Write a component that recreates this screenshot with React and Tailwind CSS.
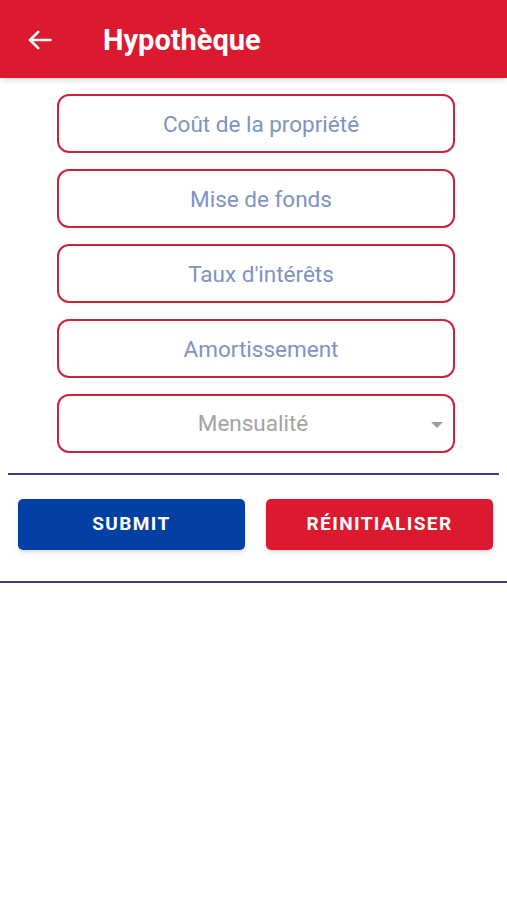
import { useState } from 'react'

const fields = ['Coût de la propriété', 'Mise de fonds', "Taux d'intérêts", 'Amortissement']

export default function App() {
  const [values, setValues] = useState({})

  return (
    <div className="min-h-[900px] bg-white font-['Roboto',sans-serif]">
      {/* Header */}
      <div className="h-[78px] bg-[#dc1a2f] flex items-center shadow-md">
        <svg className="ml-[26px] mt-[2px]" width="28" height="28" viewBox="0 0 24 24" fill="none" stroke="white" strokeWidth="2.3" strokeLinecap="round" strokeLinejoin="round">
          <path d="M21 12H3.5" />
          <path d="M10.5 5l-7 7 7 7" />
        </svg>
        <h1 className="ml-[49px] mt-[3px] text-white text-[29px] font-bold">Hypothèque</h1>
      </div>

      {/* Form */}
      <div className="flex flex-col gap-[16px] pt-[16px] pl-[57px]">
        {fields.map((f) => (
          <input
            key={f}
            placeholder={f}
            value={values[f] || ''}
            onChange={(e) => setValues({ ...values, [f]: e.target.value })}
            className="w-[398px] h-[59px] pl-[10px] rounded-[12px] border-2 border-[#c8243a] text-center text-[22.5px] text-[#4a68a8] placeholder:text-[#7d93c4] outline-none"
          />
        ))}
        <div className="relative w-[398px] h-[59px] pr-[6px] rounded-[12px] border-2 border-[#c8243a] flex items-center justify-center">
          <span className="text-[22.5px] text-[#a3a3a3]">Mensualité</span>
          <svg className="absolute right-[10px] top-[26px]" width="12" height="6" viewBox="0 0 12 6">
            <path d="M0 0h12L6 6z" fill="#9e9e9e" />
          </svg>
        </div>
      </div>

      <div className="mx-[8px] mt-[20px] h-[2px] bg-[#3d3a96]" />

      {/* Buttons */}
      <div className="flex gap-[21px] pl-[18px] pt-[24px] pb-[31px]">
        <button className="w-[227px] h-[51px] rounded-[5px] bg-[#0340a4] text-white text-[19px] font-bold tracking-[1.4px] shadow-md">
          SUBMIT
        </button>
        <button className="w-[227px] h-[51px] rounded-[5px] bg-[#dc1a2f] text-white text-[19px] font-bold tracking-[1.4px] shadow-md">
          RÉINITIALISER
        </button>
      </div>

      <div className="h-[2px] bg-[#3d3a96]" />
    </div>
  )
}
